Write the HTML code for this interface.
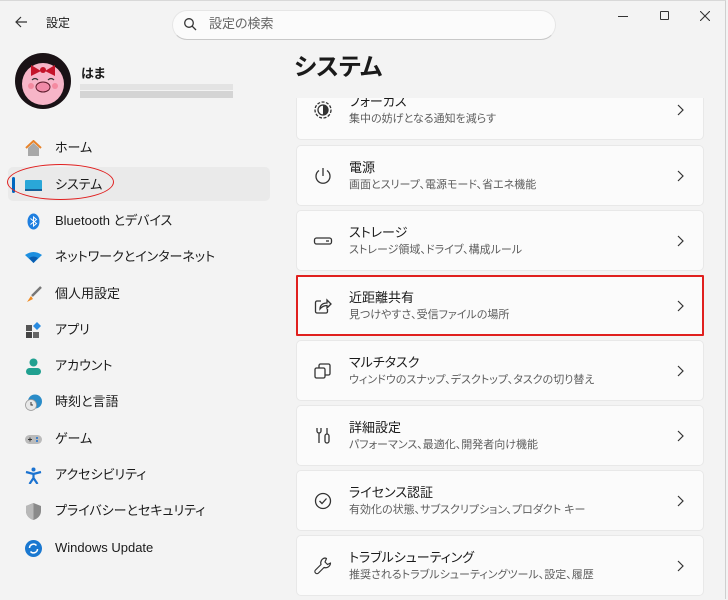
<!DOCTYPE html>
<html><head><meta charset="utf-8"><style>
*{margin:0;padding:0;box-sizing:border-box}
body{width:728px;height:599px;background:#f3f3f3;font-family:"Liberation Sans","Noto Sans CJK JP",sans-serif;color:#1a1a1a;position:relative;overflow:hidden;line-height:1.2;font-feature-settings:"palt"}
.win{position:absolute;left:0;top:0;width:726px;height:599px;background:#f3f3f3;border-right:1px solid #cfcfcf;border-top:1px solid #d8d8d8}
.abs{position:absolute}
.search{left:172px;top:9px;width:384px;height:30px;background:#fbfbfb;border-radius:15px;border:1px solid #e6e6e6;border-bottom:1px solid #c8c8c8}
.nav{position:absolute;left:0;width:270px;height:34px;font-size:13px}
.nav .ic{position:absolute;left:25px;top:9px;width:17px;height:17px}
.nav span{position:absolute;left:55px;top:9px}
.clip{position:absolute;left:290px;top:97px;width:430px;height:502px;overflow:hidden}
.card{position:absolute;left:6px;width:408px;height:61px;background:#fbfbfb;border:1px solid #e8e8e8;border-radius:5px}
.card .t{position:absolute;left:52px;top:14px;font-size:13px;color:#1a1a1a}
.card .s{position:absolute;left:52px;top:33px;font-size:11px;color:#5d5d5d}
.card .ch{position:absolute;right:16px;top:22px;width:14px;height:16px}
.card .i{position:absolute;left:16px;top:20px;width:20px;height:20px}
</style></head><body>
<div class="win">
<svg class="abs" style="left:14px;top:14px" width="14" height="14" viewBox="0 0 14 14"><path d="M13 7H2M7 2L2 7l5 5" stroke="#333" stroke-width="1.2" fill="none"/></svg>
<div class="abs" style="left:46px;top:15px;font-size:12px">設定</div>
<div class="abs search"></div>
<svg class="abs" style="left:183px;top:16px" width="14" height="14" viewBox="0 0 14 14"><circle cx="6" cy="6" r="4.3" stroke="#333" stroke-width="1.3" fill="none"/><path d="M9.2 9.2L13 13" stroke="#333" stroke-width="1.3"/></svg>
<div class="abs" style="left:209px;top:15px;font-size:13px;color:#666">設定の検索</div>
<div class="abs" style="left:618px;top:15px;width:10px;height:1px;background:#333"></div>
<div class="abs" style="left:660px;top:10px;width:9px;height:9px;border:1.2px solid #333;border-radius:1px"></div>
<svg class="abs" style="left:700px;top:10px" width="10" height="10"><path d="M0 0L10 10M10 0L0 10" stroke="#333" stroke-width="1.1"/></svg>

<svg class="abs" style="left:15px;top:52px" width="56" height="56" viewBox="0 0 56 56"><circle cx="28" cy="28" r="28" fill="#1a1216"/><circle cx="28" cy="31" r="21" fill="#f7b5c8"/><path d="M16 12l10 6-10 5zM40 12l-10 6 10 5z" fill="#c4142a"/><circle cx="28" cy="17" r="3" fill="#c4142a"/><ellipse cx="28" cy="34" rx="7" ry="5" fill="#f08aa8" stroke="#5a1a2a"/><path d="M17 27q3-3 6 0M33 27q3-3 6 0" stroke="#333" stroke-width="1.2" fill="none"/><circle cx="16" cy="33" r="3" fill="#f48aa0"/><circle cx="40" cy="33" r="3" fill="#f48aa0"/></svg>
<div class="abs" style="left:81px;top:65px;font-size:13px;font-weight:bold">はま</div>
<div class="abs" style="left:80px;top:83px;width:153px;height:6px;background:#e3e3e3"></div>
<div class="abs" style="left:80px;top:90px;width:153px;height:7px;background:#d4d4d4"></div>

<div class="nav" style="top:130px"><svg class="ic" viewBox="0 0 17 17"><path d="M1 8L8.5 1 16 8" stroke="#e8832a" stroke-width="2" fill="none"/><path d="M3 8v8h11V8L8.5 3z" fill="#a8a8a8"/></svg><span>ホーム</span></div>
<div class="abs" style="left:8px;top:166px;width:262px;height:34px;background:#eaeaea;border-radius:5px"></div>
<div class="abs" style="left:12px;top:176px;width:3px;height:16px;background:#0067c0;border-radius:2px"></div>
<div class="nav" style="top:167px"><svg class="ic" viewBox="0 0 17 17"><rect x="0" y="3" width="17" height="11" rx="1" fill="#2aa7d8"/><rect x="0" y="12" width="17" height="2" fill="#16609a"/></svg><span>システム</span></div>
<div class="abs" style="left:7px;top:163px;width:107px;height:36px;border:1.5px solid #e02020;border-radius:50%"></div>
<div class="nav" style="top:203px"><svg class="ic" viewBox="0 0 17 17"><ellipse cx="8.5" cy="8.5" rx="6" ry="8" fill="#1f7fe0"/><path d="M5.5 5.5l6 5-3 2.5v-9l3 2.5-6 5" stroke="#fff" stroke-width="1" fill="none"/></svg><span>Bluetooth とデバイス</span></div>
<div class="nav" style="top:239px"><svg class="ic" viewBox="0 0 17 17"><path d="M0 6q8.5-6 17 0L8.5 14z" fill="#1d8fe0"/><path d="M4 9q4.5-3 9 0L8.5 14z" fill="#0a5db0"/></svg><span>ネットワークとインターネット</span></div>
<div class="nav" style="top:276px"><svg class="ic" viewBox="0 0 17 17"><path d="M16 1L7 10" stroke="#777" stroke-width="2.5"/><path d="M6 10l-4 6 6-3z" fill="#f08a20"/></svg><span>個人用設定</span></div>
<div class="nav" style="top:312px"><svg class="ic" viewBox="0 0 17 17"><rect x="1" y="3" width="6" height="6" fill="#555"/><rect x="1" y="10" width="6" height="6" fill="#444"/><rect x="8" y="10" width="6" height="6" fill="#666"/><path d="M12 0l4 4-4 4-4-4z" fill="#2a8be0"/></svg><span>アプリ</span></div>
<div class="nav" style="top:348px"><svg class="ic" viewBox="0 0 17 17"><circle cx="8.5" cy="4.5" r="4" fill="#20a090"/><rect x="1" y="10" width="15" height="7" rx="3.5" fill="#20a090"/></svg><span>アカウント</span></div>
<div class="nav" style="top:384px"><svg class="ic" viewBox="0 0 17 17"><circle cx="10" cy="7.5" r="7" fill="#2a8cc8"/><circle cx="6" cy="11" r="5.5" fill="#e8e8e8" stroke="#999" stroke-width=".8"/><path d="M6 8v3h2" stroke="#333" fill="none"/></svg><span>時刻と言語</span></div>
<div class="nav" style="top:421px"><svg class="ic" viewBox="0 0 17 17"><rect x="0" y="4" width="17" height="9" rx="4.5" fill="#bbb"/><path d="M3 8.5h4M5 6.5v4" stroke="#333"/><circle cx="12" cy="7" r="1" fill="#1a6fd0"/><circle cx="12" cy="10" r="1" fill="#1a6fd0"/></svg><span>ゲーム</span></div>
<div class="nav" style="top:457px"><svg class="ic" viewBox="0 0 17 17"><circle cx="8.5" cy="2.5" r="2" fill="#1a72d0"/><path d="M1 5l7.5 2 7.5-2M8.5 7v4l-4 6M8.5 11l4 6" stroke="#1a72d0" stroke-width="2.2" fill="none"/></svg><span>アクセシビリティ</span></div>
<div class="nav" style="top:493px"><svg class="ic" viewBox="0 0 17 17"><path d="M8.5 0L16 3v5c0 5-4 8-7.5 9C5 16 1 13 1 8V3z" fill="#8a8a8a"/><path d="M8.5 0V17C5 16 1 13 1 8V3z" fill="#b8b8b8"/></svg><span>プライバシーとセキュリティ</span></div>
<div class="nav" style="top:530px"><svg class="ic" viewBox="0 0 17 17"><circle cx="8.5" cy="8.5" r="8.5" fill="#1a78d0"/><path d="M4.5 8a4 4 0 017-2.5M12.5 9a4 4 0 01-7 2.5" stroke="#fff" stroke-width="1.5" fill="none"/></svg><span>Windows Update</span></div>

<div class="abs" style="left:294px;top:53px;font-size:24px;font-weight:bold;color:#1a1a1a">システム</div>

<div class="clip">
<div class="card" style="top:-19px"><svg class="i" viewBox="0 0 20 20"><circle cx="10" cy="10" r="8" stroke="#333" stroke-width="1.3" fill="none" stroke-dasharray="3 1.5"/><circle cx="10" cy="10" r="5" stroke="#333" stroke-width="1.3" fill="none"/><path d="M10 5a5 5 0 010 10z" fill="#333"/></svg><div class="t">フォーカス</div><div class="s">集中の妨げとなる通知を減らす</div><svg class="ch" viewBox="0 0 14 16"><path d="M5 3l5 5-5 5" stroke="#333" stroke-width="1.2" fill="none"/></svg></div>
<div class="card" style="top:47px"><svg class="i" viewBox="0 0 20 20"><path d="M10 2v8" stroke="#333" stroke-width="1.3"/><path d="M6 4.5a7 7 0 108 0" stroke="#333" stroke-width="1.3" fill="none"/></svg><div class="t">電源</div><div class="s">画面とスリープ、電源モード、省エネ機能</div><svg class="ch" viewBox="0 0 14 16"><path d="M5 3l5 5-5 5" stroke="#333" stroke-width="1.2" fill="none"/></svg></div>
<div class="card" style="top:112px"><svg class="i" viewBox="0 0 20 20"><rect x="1.5" y="7" width="17" height="6" rx="2" stroke="#333" stroke-width="1.3" fill="none"/><path d="M13 10h3" stroke="#333" stroke-width="1.3"/></svg><div class="t">ストレージ</div><div class="s">ストレージ領域、ドライブ、構成ルール</div><svg class="ch" viewBox="0 0 14 16"><path d="M5 3l5 5-5 5" stroke="#333" stroke-width="1.2" fill="none"/></svg></div>
<div class="card" style="top:177px;border:2px solid #e0201e;border-radius:1px"><svg class="i" style="left:15px;top:19px" viewBox="0 0 20 20"><path d="M8 5H4a1.5 1.5 0 00-1.5 1.5v9A1.5 1.5 0 004 17h9a1.5 1.5 0 001.5-1.5V13" stroke="#333" stroke-width="1.3" fill="none"/><path d="M7 13c0-4 3-6 7-6V4l4 4-4 4V9.5c-3 0-5 1-7 3.5z" stroke="#333" stroke-width="1.3" fill="none"/></svg><div class="t" style="left:51px;top:13px">近距離共有</div><div class="s" style="left:51px;top:32px">見つけやすさ、受信ファイルの場所</div><svg class="ch" style="right:15px;top:21px" viewBox="0 0 14 16"><path d="M5 3l5 5-5 5" stroke="#333" stroke-width="1.2" fill="none"/></svg></div>
<div class="card" style="top:242px"><svg class="i" viewBox="0 0 20 20"><rect x="2" y="7" width="10" height="10" rx="1.5" stroke="#333" stroke-width="1.3" fill="none"/><path d="M6 7V4.5A1.5 1.5 0 017.5 3h8A1.5 1.5 0 0117 4.5v8a1.5 1.5 0 01-1.5 1.5H12" stroke="#333" stroke-width="1.3" fill="none"/></svg><div class="t">マルチタスク</div><div class="s">ウィンドウのスナップ、デスクトップ、タスクの切り替え</div><svg class="ch" viewBox="0 0 14 16"><path d="M5 3l5 5-5 5" stroke="#333" stroke-width="1.2" fill="none"/></svg></div>
<div class="card" style="top:307px"><svg class="i" viewBox="0 0 20 20"><path d="M4 2v3a2 2 0 002 2v10M8 2v3a2 2 0 01-2 2" stroke="#333" stroke-width="1.3" fill="none"/><rect x="12" y="8" width="4" height="9" rx="2" stroke="#333" stroke-width="1.3" fill="none"/><path d="M14 2v6" stroke="#333" stroke-width="1.3"/></svg><div class="t">詳細設定</div><div class="s">パフォーマンス、最適化、開発者向け機能</div><svg class="ch" viewBox="0 0 14 16"><path d="M5 3l5 5-5 5" stroke="#333" stroke-width="1.2" fill="none"/></svg></div>
<div class="card" style="top:372px"><svg class="i" viewBox="0 0 20 20"><circle cx="10" cy="10" r="7.5" stroke="#333" stroke-width="1.3" fill="none"/><path d="M6.5 10l2.5 2.5 4.5-5" stroke="#333" stroke-width="1.3" fill="none"/></svg><div class="t">ライセンス認証</div><div class="s">有効化の状態、サブスクリプション、プロダクト キー</div><svg class="ch" viewBox="0 0 14 16"><path d="M5 3l5 5-5 5" stroke="#333" stroke-width="1.2" fill="none"/></svg></div>
<div class="card" style="top:437px"><svg class="i" viewBox="0 0 20 20"><path d="M12 2a5 5 0 00-4 6.5L2.5 14a2 2 0 003 3L11 11.5A5 5 0 0017.5 7l-3 1.5L12 6l1.5-3.5z" stroke="#333" stroke-width="1.2" fill="none" stroke-linejoin="round"/></svg><div class="t">トラブルシューティング</div><div class="s">推奨されるトラブルシューティングツール、設定、履歴</div><svg class="ch" viewBox="0 0 14 16"><path d="M5 3l5 5-5 5" stroke="#333" stroke-width="1.2" fill="none"/></svg></div>
</div>
</div>
</body></html>
